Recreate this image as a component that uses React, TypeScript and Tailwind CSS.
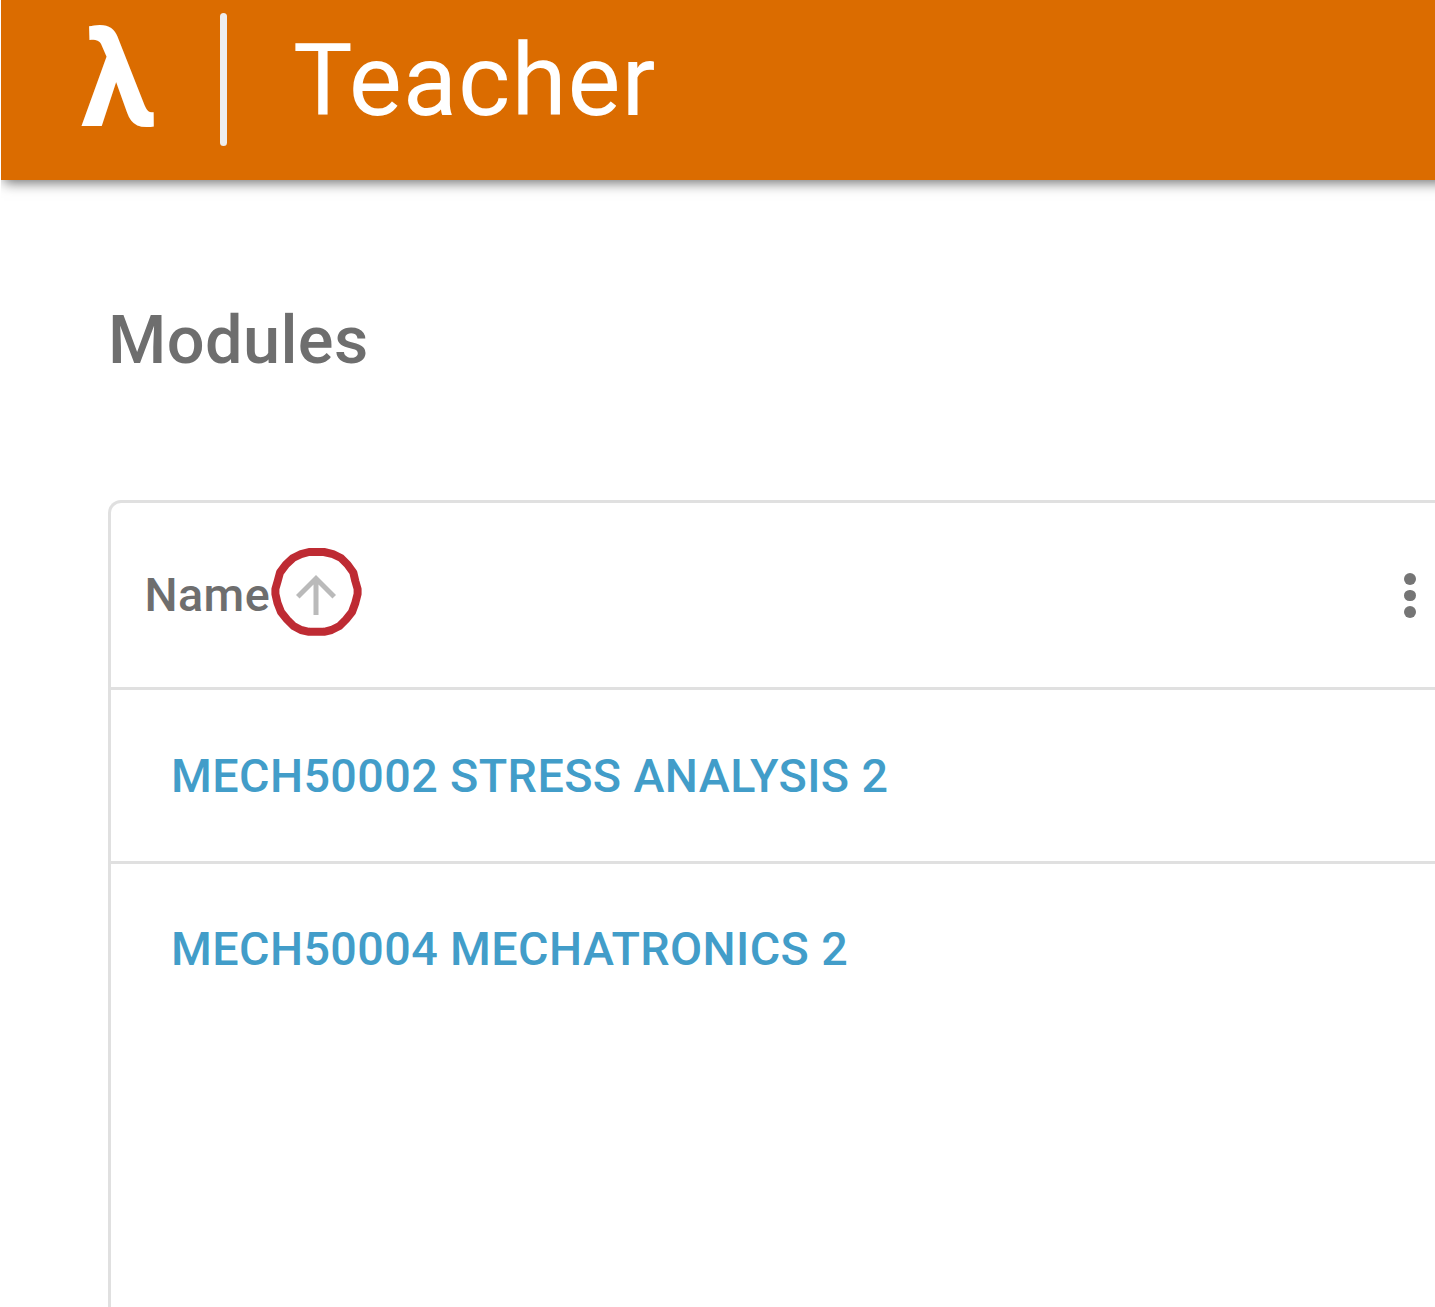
const modules = ["MECH50002 STRESS ANALYSIS 2", "MECH50004 MECHATRONICS 2"];

function Header() {
  return (
    <header className="-mr-5 ml-px flex h-[180px] items-center bg-[#db6c00] pb-[19px] pl-[80px] text-white shadow-[3px_3px_12px_rgba(0,0,0,0.55)] [clip-path:inset(0_0_-40px_0)]">
      <span className="w-[76px] text-[133.4px] leading-[160px] font-bold">λ</span>
      <span className="mb-[2px] ml-[62.5px] h-[133.5px] w-[7px] rounded-full bg-[#eeeeee]" />
      <h1 className="mt-px ml-[66.5px] text-[100px] leading-[160px] font-normal tracking-[0.95px]">Teacher</h1>
    </header>
  );
}

function SortArrow() {
  return (
    <svg viewBox="0 0 24 24" className="ml-[16px] size-[60px] shrink-0 fill-[#bababa]">
      <path d="M4 12l1.41 1.41L11 7.83V20h2V7.83l5.58 5.59L20 12l-8-8-8 8z" />
    </svg>
  );
}

function SortHighlight() {
  return (
    <svg viewBox="270 546 94 92" className="absolute top-[43px] left-[159px] h-[92px] w-[94px]">
      <path
        d="M309 552H324L333 554.2L341 558L347.5 564.5L353.3 572.5L355.3 581L357.6 589V594L355.3 603L352 612L346 619.5L339.5 626L331.5 630L324 631.8H309L301 630L293.5 626L287 619.5L281 612L277.5 603L275.4 594V589L277.7 581L280 572.5L286 564.5L293 558L301 554.2Z"
        fill="none"
        stroke="#be2b33"
        strokeWidth="8"
        strokeLinejoin="round"
      />
    </svg>
  );
}

function MenuDots() {
  return (
    <button className="mt-px mr-[19px] ml-auto flex flex-col gap-[5px]" aria-label="Column menu">
      <span className="size-[11.7px] rounded-full bg-[#757575]" />
      <span className="size-[11.7px] rounded-full bg-[#757575]" />
      <span className="size-[11.7px] rounded-full bg-[#757575]" />
    </button>
  );
}

export default function App() {
  return (
    <div className="flex h-[1307px] w-[1435px] flex-col overflow-hidden bg-white font-[Roboto,sans-serif]">
      <Header />
      <main className="flex flex-1 flex-col pl-[108px]">
        <h2 className="mt-[120px] text-[66.7px] leading-[80px] font-medium tracking-[0.4px] text-[#6e6e6e]">Modules</h2>
        <section className="mt-[120px] flex-1 rounded-tl-[13px] border-t-[3px] border-l-[3px] border-[#e0e0e0]">
          <div className="relative flex h-[187px] items-center border-b-[3px] border-[#e0e0e0] pl-[33.5px]">
            <span className="text-[46.7px] leading-[70px] font-medium tracking-[0.4px] text-[#6e6e6e]">Name</span>
            <SortArrow />
            <SortHighlight />
            <MenuDots />
          </div>
          {modules.map((name) => (
            <div
              key={name}
              className="flex h-[174px] items-center border-b-[3px] border-[#e0e0e0] pl-[60px] last:h-[172px] last:border-transparent"
            >
              <a className="text-[46.7px] leading-[70px] font-medium tracking-[0.4px] text-[#429dc9]">{name}</a>
            </div>
          ))}
        </section>
      </main>
    </div>
  );
}
